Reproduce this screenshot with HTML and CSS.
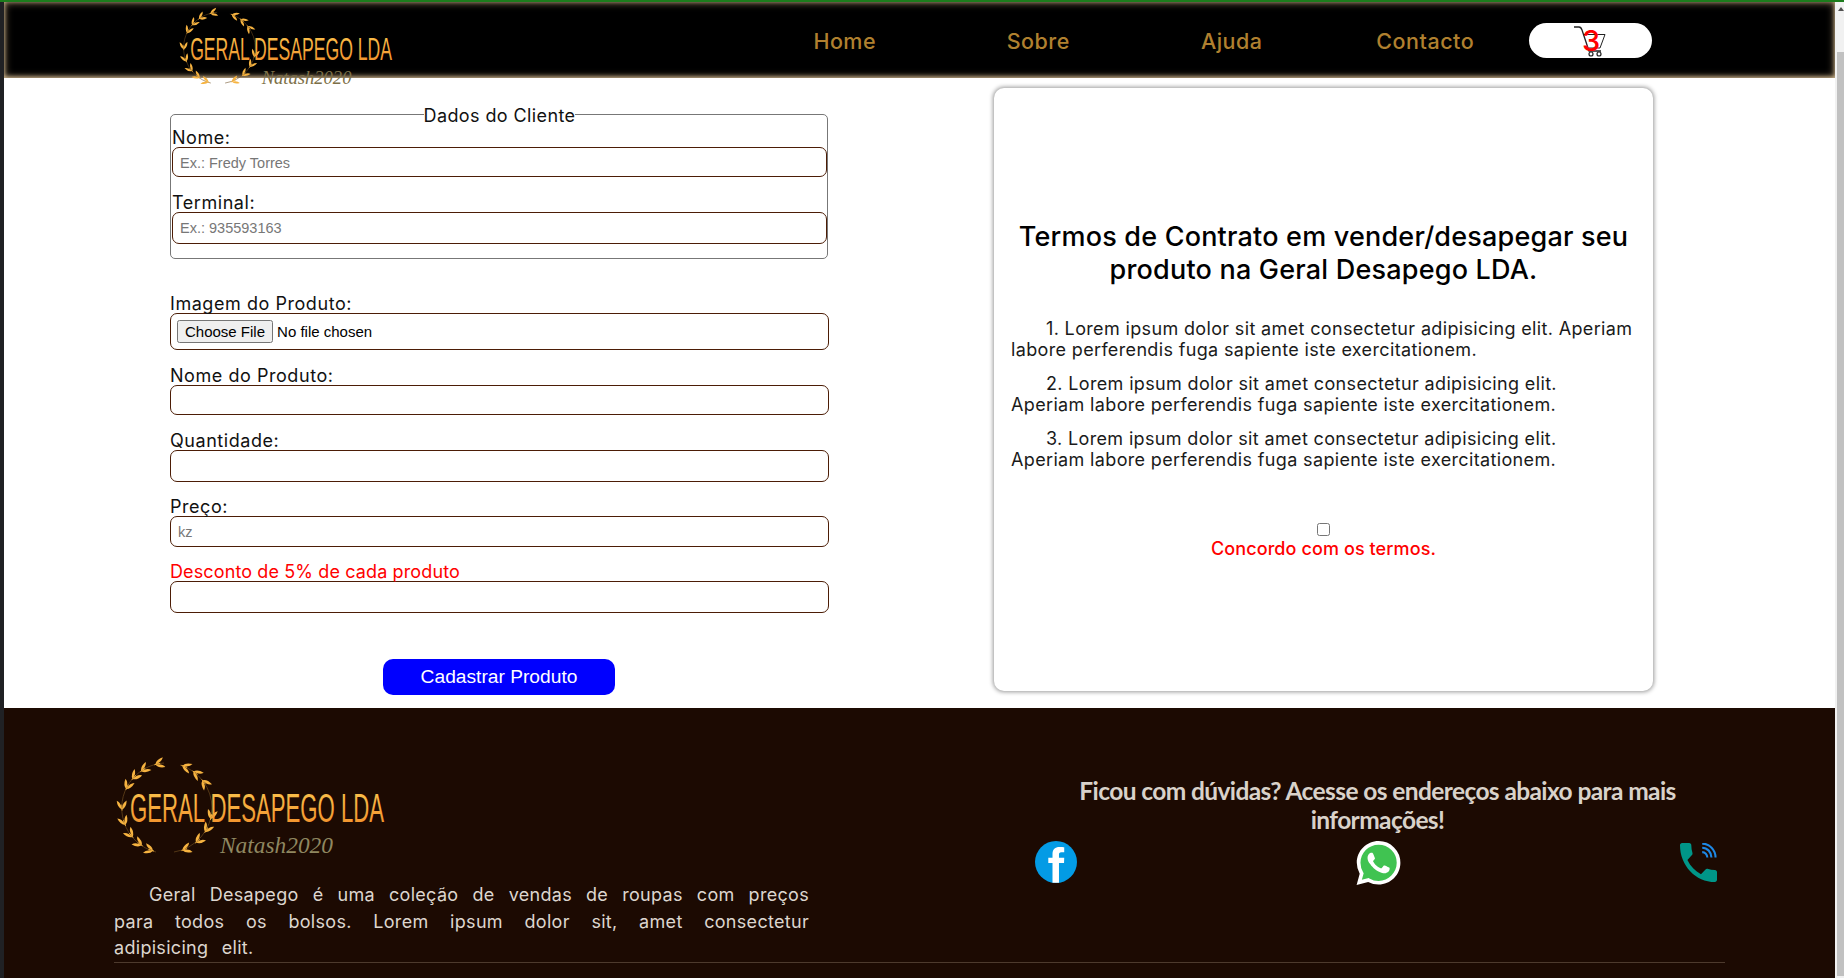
FILE: index.html
```html
<!DOCTYPE html>
<html lang="pt">
<head>
    <meta charset="UTF-8">
    <meta name="viewport" content="width=device-width, initial-scale=1.0">
    <title>Geral Desapego LDA</title>
    <link rel="stylesheet" href="styles.css">
</head>
<body>

    <!-- shared logo pieces -->
    <svg class="defs" width="0" height="0">
        <defs>
            <linearGradient id="gold" x1="0" y1="0" x2="0" y2="1">
                <stop offset="0" stop-color="#fbc850"/>
                <stop offset="1" stop-color="#f08a28"/>
            </linearGradient>
            <g id="sprig" fill="#f6b340">
                <path d="M0 0Q2-4.500 9-5Q7-.5 0 0Z"/>
                <path d="M0 0Q2 4.500 9 5Q7 .5 0 0Z"/>
                <path d="M-1 0H5" stroke="#f6b340" stroke-width=".9"/>
            </g>
            <g id="wreath" transform="translate(2 0)">
                <path d="M52 13A45 45 0 0 0 12 72A45 45 0 0 0 44 102" fill="none" stroke="#6b4a1e" stroke-width=".7"/>
                <path d="M68 15A45 45 0 0 1 100 58A45 45 0 0 1 62 102" fill="none" stroke="#6b4a1e" stroke-width=".7"/>
                <use href="#sprig" transform="rotate(-15 55 58) translate(55 13)"/>
                <use href="#sprig" transform="rotate(-35 55 58) translate(55 13)"/>
                <use href="#sprig" transform="rotate(-50 55 58) translate(55 13)"/>
                <use href="#sprig" transform="rotate(-65 55 58) translate(55 13)"/>
                <use href="#sprig" transform="rotate(-92 55 58) translate(55 13)"/>
                <use href="#sprig" transform="rotate(-112 55 58) translate(55 13)"/>
                <use href="#sprig" transform="rotate(-130 55 58) translate(55 13)"/>
                <use href="#sprig" transform="rotate(-146 55 58) translate(55 13)"/>
                <use href="#sprig" transform="rotate(-162 55 58) translate(55 13)"/>
                <use href="#sprig" transform="rotate(20 55 58) translate(55 13)"/>
                <use href="#sprig" transform="rotate(36 55 58) translate(55 13)"/>
                <use href="#sprig" transform="rotate(52 55 58) translate(55 13)"/>
                <use href="#sprig" transform="rotate(104 55 58) translate(55 13) scale(-1 1)"/>
                <use href="#sprig" transform="rotate(122 55 58) translate(55 13) scale(-1 1)"/>
                <use href="#sprig" transform="rotate(140 55 58) translate(55 13) scale(-1 1)"/>
                <use href="#sprig" transform="rotate(160 55 58) translate(55 13) scale(-1 1)"/>
            </g>
        </defs>
    </svg>

    <div class="top-line"></div>

    <div class="window">
        <div class="left-strip"></div>

        <div class="page">

            <header class="site-header">
                <svg class="logo logo-small" viewBox="0 0 280 112">
                    <use href="#wreath"/>
                    <text class="logo-name" x="20" y="73" textLength="254" lengthAdjust="spacingAndGlyphs">GERAL DESAPEGO LDA</text>
                    <text class="logo-sign logo-sign-dark" x="110" y="103" textLength="113" lengthAdjust="spacingAndGlyphs">Natash2020</text>
                </svg>

                <nav class="main-nav">
                    <a href="#">Home</a>
                    <a href="#">Sobre</a>
                    <a href="#">Ajuda</a>
                    <a href="#">Contacto</a>
                    <div class="cart-pill">
                        <svg class="cart-icon" viewBox="0 0 33 32" width="33" height="32">
                            <path d="M1 2H6Q8 2 9 5L16 26H28" fill="none" stroke="#222" stroke-width="1.300"/>
                            <path d="M10 9.500H32L27 23H14" fill="none" stroke="#222" stroke-width="1"/>
                            <circle cx="18" cy="29" r="2" fill="none" stroke="#222" stroke-width="1.200"/>
                            <circle cx="26" cy="29" r="2" fill="none" stroke="#222" stroke-width="1.200"/>
                        </svg>
                        <span class="cart-count">3</span>
                    </div>
                </nav>
            </header>

            <main class="content">
                <form class="product-form">
                    <fieldset class="client-box">
                        <legend>Dados do Cliente</legend>
                        <label for="nome">Nome:</label>
                        <input class="text-input h30" type="text" id="nome" placeholder="Ex.: Fredy Torres">
                        <label class="mt14" for="terminal">Terminal:</label>
                        <input class="text-input h32" type="text" id="terminal" placeholder="Ex.: 935593163">
                    </fieldset>

                    <label class="mt33" for="imagem">Imagem do Produto:</label>
                    <input class="text-input file-input" type="file" id="imagem">

                    <label class="mt14" for="produto">Nome do Produto:</label>
                    <input class="text-input h30" type="text" id="produto">

                    <label class="mt14" for="quantidade">Quantidade:</label>
                    <input class="text-input h32" type="text" id="quantidade">

                    <label class="mt13" for="preco">Preço:</label>
                    <input class="text-input h31" type="text" id="preco" placeholder="kz">

                    <label class="mt13 label-red" for="desconto">Desconto de 5% de cada produto</label>
                    <input class="text-input h32" type="text" id="desconto">

                    <button class="submit-btn" type="button">Cadastrar Produto</button>
                </form>

                <section class="terms-card">
                    <h2>Termos de Contrato em vender/desapegar seu produto na Geral Desapego LDA.</h2>
                    <p>1. Lorem ipsum dolor sit amet consectetur adipisicing elit. Aperiam<br>labore perferendis fuga sapiente iste exercitationem.</p>
                    <p>2. Lorem ipsum dolor sit amet consectetur adipisicing elit.<br>Aperiam labore perferendis fuga sapiente iste exercitationem.</p>
                    <p>3. Lorem ipsum dolor sit amet consectetur adipisicing elit.<br>Aperiam labore perferendis fuga sapiente iste exercitationem.</p>
                    <div class="agree">
                        <input type="checkbox" id="agree">
                        <label for="agree">Concordo com os termos.</label>
                    </div>
                </section>
            </main>

            <footer class="site-footer">
                <div class="footer-top">
                    <div class="footer-about">
                        <svg class="logo logo-big" viewBox="0 0 280 112">
                            <use href="#wreath"/>
                            <text class="logo-name" x="20" y="72" textLength="254" lengthAdjust="spacingAndGlyphs">GERAL DESAPEGO LDA</text>
                            <text class="logo-sign" x="110" y="103" textLength="113" lengthAdjust="spacingAndGlyphs">Natash2020</text>
                        </svg>
                        <p>Geral Desapego é uma coleção de vendas de roupas com preços para todos os bolsos. Lorem ipsum dolor sit, amet consectetur adipisicing elit.</p>
                    </div>

                    <div class="footer-contact">
                        <h3>Ficou com dúvidas? Acesse os endereços abaixo para mais informações!</h3>
                        <div class="contact-icons">
                            <svg class="icon-fb" viewBox="0 0 24 24" width="42" height="42">
                                <circle cx="12" cy="12" r="12" fill="#039be5"/>
                                <path d="M16.600 12.600H13.700V23.900H10V12.600H7.600V9.500H10V7.400C10 4.800 11.500 3.400 14 3.400C15.100 3.400 16.200 3.500 16.700 3.600V6.400H15.100C13.900 6.400 13.700 7 13.700 7.800V9.500H16.700Z" fill="#fff"/>
                            </svg>
                            <svg class="icon-wa" viewBox="0 0 24 24" width="45" height="44">
                                <path d="M.057 24l1.687-6.163a11.867 11.867 0 01-1.587-5.946C.16 5.335 5.495 0 12.050 0a11.817 11.817 0 018.413 3.488 11.824 11.824 0 013.480 8.414c-.003 6.557-5.338 11.892-11.893 11.892a11.900 11.900 0 01-5.688-1.448L.057 24z" fill="#fff"/>
                                <path d="M12.050 21.785h-.004a9.870 9.870 0 01-5.030-1.378l-.361-.214-3.741.982.998-3.648-.235-.374a9.860 9.860 0 01-1.510-5.260c.001-5.450 4.436-9.884 9.888-9.884 2.640 0 5.122 1.030 6.988 2.898a9.825 9.825 0 012.893 6.994c-.003 5.450-4.437 9.884-9.885 9.884z" fill="#40c351"/>
                                <path d="M17.472 14.382c-.297-.149-1.758-.867-2.030-.967-.273-.099-.471-.148-.670.150-.197.297-.767.966-.940 1.164-.173.199-.347.223-.644.075-.297-.150-1.255-.463-2.390-1.475-.883-.788-1.480-1.761-1.653-2.059-.173-.297-.018-.458.130-.606.134-.133.298-.347.446-.520.149-.174.198-.298.298-.497.099-.198.050-.371-.025-.520-.075-.149-.669-1.612-.916-2.207-.242-.579-.487-.500-.669-.510-.173-.008-.371-.010-.570-.010-.198 0-.520.074-.792.372-.272.297-1.040 1.016-1.040 2.479 0 1.462 1.065 2.875 1.213 3.074.149.198 2.096 3.200 5.077 4.487.709.306 1.262.489 1.694.625.712.227 1.360.195 1.871.118.571-.085 1.758-.719 2.006-1.413.248-.694.248-1.289.173-1.413-.074-.124-.272-.198-.570-.347z" fill="#fff"/>
                            </svg>
                            <svg class="icon-phone" viewBox="3 3 18 18" width="37" height="39" preserveAspectRatio="none">
                                <path d="M6.620 10.790c1.440 2.830 3.760 5.140 6.590 6.590l2.200-2.200c.270-.270.670-.360 1.020-.240 1.120.370 2.330.570 3.570.570.550 0 1 .450 1 1V20c0 .550-.450 1-1 1-9.390 0-17-7.610-17-17 0-.550.450-1 1-1h3.500c.550 0 1 .450 1 1 0 1.250.200 2.450.570 3.570.110.350.030.740-.250 1.020l-2.200 2.200z" fill="#009688"/>
                                <g fill="none" stroke="#1e88e5" stroke-width="1">
                                    <path d="M13.800 7.200A2.500 2.500 0 0 1 16.300 9.700"/>
                                    <path d="M13.800 5.200A4.500 4.500 0 0 1 18.300 9.700"/>
                                    <path d="M13.800 3.300A6.500 6.500 0 0 1 20.300 9.700"/>
                                </g>
                            </svg>
                        </div>
                    </div>
                </div>
                <div class="footer-line"></div>
            </footer>

        </div>

        <div class="scrollbar">
            <div class="scroll-up"></div>
            <div class="scroll-thumb"></div>
        </div>
    </div>

</body>
</html>
```

FILE: styles.css
```css
* {
    box-sizing: border-box;
}

html, body {
    margin: 0;
    height: 978px;
    overflow: hidden;
}

body {
    font-family: "Inter", "Liberation Sans", sans-serif;
    background-color: #fff;
}

.defs {
    position: absolute;
}

.top-line {
    height: 2px;
    background-color: #1c7c1c;
}

.window {
    display: flex;
    height: 976px;
}

.left-strip {
    width: 4px;
    background-color: #202124;
}

.page {
    flex: 1;
    min-width: 0;
}

.scrollbar {
    width: 9px;
    background-color: #f1f1f1;
}

.scroll-up {
    width: 0;
    height: 0;
    margin: 5px 0 0 3px;
    border-left: 3px solid transparent;
    border-right: 3px solid transparent;
    border-bottom: 4px solid #505050;
}

.scroll-thumb {
    height: 924px;
    margin: 41px 0 0 2px;
    background-color: #c1c1c1;
}

/* header */
.site-header {
    position: relative;
    z-index: 2;
    display: flex;
    justify-content: space-between;
    height: 76px;
    padding: 0 183px 0 170px;
    background-color: #000;
    box-shadow: inset 0 -1px 4px #d0b890, inset 0 0 9px #8f7a5c;
}

.logo {
    display: block;
    overflow: visible;
}

.logo-small {
    width: 223px;
    height: 89px;
}

.logo-big {
    width: 280px;
    height: 112px;
}

.logo-name {
    font-family: "Liberation Sans", sans-serif;
    font-size: 40px;
    fill: url(#gold);
}

.logo-sign {
    font-family: "Liberation Serif", serif;
    font-style: italic;
    font-size: 24px;
    fill: #8f8760;
}

.logo-sign-dark {
    fill: #7d7048;
}

.main-nav {
    display: flex;
    align-items: center;
    height: 77px;
}

.main-nav a {
    width: 193.500px;
    text-align: center;
    font-size: 21.500px;
    font-weight: 500;
    letter-spacing: .5px;
    color: #b0802f;
    text-decoration: none;
}

.cart-pill {
    position: relative;
    display: flex;
    align-items: center;
    justify-content: center;
    width: 123px;
    height: 35px;
    margin-left: 7px;
    border-radius: 18px;
    background-color: #fff;
}

.cart-icon {
    margin-right: 2px;
}

.cart-count {
    position: absolute;
    left: 53px;
    top: 0;
    font-size: 29px;
    line-height: 35px;
    font-weight: 500;
    color: #f00;
}

/* main */
.content {
    display: flex;
    height: 630px;
    padding: 10px 0 0 166px;
}

.product-form {
    width: 659px;
    padding-top: 15px;
}

.product-form label {
    display: block;
    font-size: 18px;
    line-height: 23px;
    letter-spacing: .55px;
    color: #111;
}

.client-box {
    width: 658px;
    margin: 0;
    padding: 0 0 14px 1px;
    border: 1px solid #777;
    border-radius: 5px;
}

.client-box legend {
    margin: 0 auto;
    padding: 3px 0 0;
    font-size: 18px;
    line-height: 20px;
    letter-spacing: .4px;
    color: #111;
}

.text-input {
    display: block;
    width: 100%;
    margin-top: -2px;
    padding: 0 7px;
    border: 1px solid #4c1d06;
    border-radius: 7px;
    font-family: "Liberation Sans", sans-serif;
    font-size: 14.500px;
    background-color: #fff;
}

.text-input::placeholder {
    color: #777;
}

.h30 {
    height: 30px;
    padding-top: 1px;
}

.h31 {
    height: 31px;
}

.h32 {
    height: 32px;
}

.mt13 {
    margin-top: 13px;
}

.mt14 {
    margin-top: 14px;
}

.mt33 {
    margin-top: 33px;
}

.file-input {
    height: 37px;
    padding: 6px;
    font-size: 15px;
}

.product-form .label-red {
    letter-spacing: .12px;
    color: #f00;
}

.submit-btn {
    display: block;
    width: 232px;
    height: 36px;
    margin: 46px 0 0 213px;
    border: 0;
    border-radius: 10px;
    font-family: "Liberation Sans", sans-serif;
    font-size: 19.200px;
    color: #fff;
    background-color: #00f;
}

.terms-card {
    width: 659px;
    height: 603px;
    margin-left: 165px;
    padding: 132px 17px 0;
    border-radius: 10px;
    box-shadow: 0 0 4px 1px #999;
    background-color: #fff;
}

.terms-card h2 {
    margin: 0 0 32px;
    text-align: center;
    font-size: 27px;
    line-height: 33px;
    font-weight: 500;
    letter-spacing: .2px;
    color: #000;
}

.terms-card p {
    margin: 0 0 13px;
    font-size: 18px;
    line-height: 21px;
    letter-spacing: .35px;
    text-indent: 35px;
    color: #1a1a1a;
}

.agree {
    display: flex;
    flex-direction: column;
    align-items: center;
    margin-top: 53px;
}

.agree input {
    width: 13px;
    height: 13px;
    margin: 0 0 2px;
}

.agree label {
    font-size: 18px;
    line-height: 22px;
    font-weight: 500;
    letter-spacing: .1px;
    color: #f00;
}

/* footer */
.site-footer {
    height: 270px;
    padding: 42px 110px 0 106px;
    background-color: #1c0a02;
}

.footer-top {
    display: flex;
    justify-content: space-between;
}

.footer-about {
    width: 699px;
}

.footer-about p {
    margin: 20px 0 0 4px;
    font-size: 18px;
    line-height: 26.500px;
    letter-spacing: .3px;
    word-spacing: 8px;
    text-align: justify;
    text-indent: 35px;
    color: #ddd6cf;
}

.footer-contact {
    width: 695px;
    padding-top: 26px;
}

.footer-contact h3 {
    margin: 0;
    text-align: center;
    font-family: "Lato", sans-serif;
    font-size: 24.500px;
    line-height: 29px;
    font-weight: 700;
    letter-spacing: -.6px;
    color: #d9d2ca;
}

.contact-icons {
    display: flex;
    justify-content: space-between;
    align-items: flex-start;
    margin-top: 7px;
    padding: 0 8px 0 5px;
}

.icon-phone {
    margin-top: 2px;
}

.footer-line {
    height: 1px;
    margin-left: 4px;
    background-color: #4d3a2d;
}
```
